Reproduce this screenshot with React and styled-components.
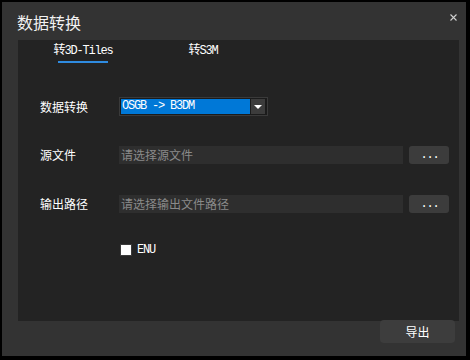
import React from "react";
import styled, { createGlobalStyle } from "styled-components";

const Global = createGlobalStyle`
  html, body { margin: 0; padding: 0; background: #000; }
  body { width: 470px; height: 360px; overflow: hidden; }
  * { box-sizing: border-box; }
`;

const cjk = `"Noto Sans CJK SC", "Microsoft YaHei", sans-serif`;
const mono = `"Liberation Mono", "Noto Sans CJK SC", monospace`;

const Dialog = styled.div`
  margin: 2px 0 0 2px;
  width: 464px;
  height: 354px;
  background: #333333;
  display: flex;
  flex-direction: column;
  font-family: ${cjk};
  color: #fff;
`;

const TitleBar = styled.div`
  height: 38px;
  display: flex;
  align-items: center;
  justify-content: space-between;
  padding: 2px 8px 0 15px;
`;

const Title = styled.div`
  font-size: 16px;
  line-height: 20px;
  color: #f2f2f2;
`;

const Close = styled.button`
  align-self: flex-start;
  margin-top: 8px;
  width: 10px;
  height: 10px;
  padding: 0;
  border: none;
  background: transparent;
  display: flex;
  align-items: center;
  justify-content: center;
`;

const Panel = styled.div`
  margin: 0 7px 0 16px;
  height: 281px;
  background: #232323;
  display: flex;
  flex-direction: column;
`;

const Tabs = styled.div`
  display: flex;
  padding-left: 5px;
`;

const Tab = styled.div`
  width: 120px;
  display: flex;
  flex-direction: column;
  align-items: center;
  padding-top: 4px;
  font-family: ${mono};
  font-size: 12px;
  letter-spacing: -1.2px;
  line-height: 14px;
  color: #fff;
  &::after {
    content: "";
    display: block;
    margin-top: 3px;
    width: 50px;
    height: 2px;
    background: ${(p) => (p.$active ? "#2f8be0" : "transparent")};
  }
`;

const Form = styled.div`
  display: flex;
  flex-direction: column;
  padding-left: 22px;
  margin-top: 34px;
`;

const Row = styled.div`
  display: flex;
  align-items: center;
  height: ${(p) => p.$h || 18}px;
  margin-bottom: ${(p) => p.$mb || 0}px;
`;

const Label = styled.div`
  width: 79px;
  font-size: 12px;
  line-height: 16px;
  color: #fff;
`;

const Select = styled.div`
  width: 149px;
  height: 19px;
  border: 1px solid #3a3a3a;
  background: #1b1b1b;
  padding: 1px 2px 1px 1px;
  display: flex;
  gap: 1px;
`;

const SelectValue = styled.div`
  flex: 1;
  background: #0078d7;
  font-family: ${mono};
  font-size: 12px;
  letter-spacing: -1.2px;
  line-height: 15px;
  padding-left: 1px;
  color: #fff;
  white-space: pre;
`;

const SelectArrow = styled.div`
  width: 14px;
  background: #3c3c3c;
  display: flex;
  align-items: center;
  justify-content: center;
`;

const Input = styled.div`
  width: 284px;
  height: 18px;
  background: #2e2e2e;
  font-size: 12px;
  line-height: 18px;
  padding-left: 2px;
  color: #8a8a8a;
`;

const DotsButton = styled.button`
  margin-left: 6px;
  width: 40px;
  height: 18px;
  border: none;
  border-radius: 3px;
  background: #3c3c3c;
  color: #fff;
  font-family: ${mono};
  font-size: 12px;
  letter-spacing: -1.2px;
  line-height: 18px;
  padding: 0 0 0 1px;
  display: flex;
  align-items: center;
  justify-content: center;
`;

const Check = styled.div`
  margin-left: 80px;
  width: 12px;
  height: 12px;
  background: #fff;
  border: 1px solid #3a3a3a;
`;

const CheckText = styled.span`
  margin-left: 5px;
  font-family: ${mono};
  font-size: 12px;
  letter-spacing: -1.2px;
  line-height: 14px;
  color: #fff;
`;

const Footer = styled.div`
  display: flex;
  justify-content: flex-end;
  padding-right: 11px;
`;

const ExportButton = styled.button`
  margin-top: -1px;
  width: 75px;
  height: 23px;
  border: none;
  border-radius: 4px;
  background: #3d3d3d;
  color: #fff;
  font-family: ${cjk};
  font-size: 12px;
  line-height: 23px;
  padding: 0;
`;

export default function App() {
  return (
    <>
      <Global />
      <Dialog>
        <TitleBar>
          <Title>数据转换</Title>
          <Close aria-label="close">
            <svg width="7" height="7" viewBox="0 0 7 7">
              <path d="M0.5 0.5 L6.5 6.5 M6.5 0.5 L0.5 6.5" stroke="#d0d0d0" strokeWidth="1.1" />
            </svg>
          </Close>
        </TitleBar>
        <Panel>
          <Tabs>
            <Tab $active>转3D-Tiles</Tab>
            <Tab>转S3M</Tab>
          </Tabs>
          <Form>
            <Row $h={19} $mb={30}>
              <Label>数据转换</Label>
              <Select>
                <SelectValue>OSGB -&gt; B3DM</SelectValue>
                <SelectArrow>
                  <svg width="8" height="4" viewBox="0 0 8 4">
                    <path d="M0 0 H8 L4 4 Z" fill="#fff" />
                  </svg>
                </SelectArrow>
              </Select>
            </Row>
            <Row $mb={31}>
              <Label>源文件</Label>
              <Input>请选择源文件</Input>
              <DotsButton>...</DotsButton>
            </Row>
            <Row $mb={30}>
              <Label>输出路径</Label>
              <Input>请选择输出文件路径</Input>
              <DotsButton>...</DotsButton>
            </Row>
            <Row $h={13}>
              <Check />
              <CheckText>ENU</CheckText>
            </Row>
          </Form>
        </Panel>
        <Footer>
          <ExportButton>导出</ExportButton>
        </Footer>
      </Dialog>
    </>
  );
}
